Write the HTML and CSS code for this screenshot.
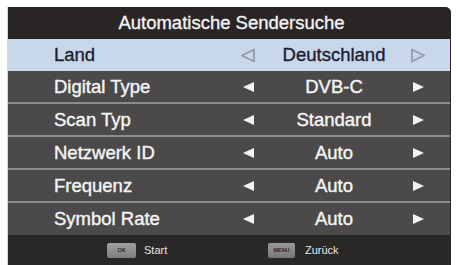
FILE: index.html
```html
<!DOCTYPE html>
<html lang="de">
<head>
<meta charset="utf-8">
<title>Automatische Sendersuche</title>
<link rel="stylesheet" href="styles.css">
</head>
<body>
<div class="panel">
  <div class="title">Automatische Sendersuche</div>
  <div class="row selected">
    <span class="label">Land</span>
    <span class="arrow"><svg width="16" height="15" viewBox="0 0 16 15"><polygon points="14,1.5 14,13.5 2,7.5" fill="none" stroke="#939cab" stroke-width="1.8" stroke-linejoin="round"/></svg></span>
    <span class="value">Deutschland</span>
    <span class="arrow"><svg width="16" height="15" viewBox="0 0 16 15"><polygon points="2,1.5 2,13.5 14,7.5" fill="none" stroke="#939cab" stroke-width="1.8" stroke-linejoin="round"/></svg></span>
  </div>
  <div class="row">
    <span class="label">Digital Type</span>
    <span class="arrow"><svg width="11" height="10" viewBox="0 0 11 10"><polygon points="11,0 11,10 0,5" class="tri"/></svg></span>
    <span class="value">DVB-C</span>
    <span class="arrow"><svg width="11" height="10" viewBox="0 0 11 10"><polygon points="0,0 0,10 11,5" class="tri"/></svg></span>
  </div>
  <div class="row">
    <span class="label">Scan Typ</span>
    <span class="arrow"><svg width="11" height="10" viewBox="0 0 11 10"><polygon points="11,0 11,10 0,5" class="tri"/></svg></span>
    <span class="value">Standard</span>
    <span class="arrow"><svg width="11" height="10" viewBox="0 0 11 10"><polygon points="0,0 0,10 11,5" class="tri"/></svg></span>
  </div>
  <div class="row">
    <span class="label">Netzwerk ID</span>
    <span class="arrow"><svg width="11" height="10" viewBox="0 0 11 10"><polygon points="11,0 11,10 0,5" class="tri"/></svg></span>
    <span class="value">Auto</span>
    <span class="arrow"><svg width="11" height="10" viewBox="0 0 11 10"><polygon points="0,0 0,10 11,5" class="tri"/></svg></span>
  </div>
  <div class="row">
    <span class="label">Frequenz</span>
    <span class="arrow"><svg width="11" height="10" viewBox="0 0 11 10"><polygon points="11,0 11,10 0,5" class="tri"/></svg></span>
    <span class="value">Auto</span>
    <span class="arrow"><svg width="11" height="10" viewBox="0 0 11 10"><polygon points="0,0 0,10 11,5" class="tri"/></svg></span>
  </div>
  <div class="row last">
    <span class="label">Symbol Rate</span>
    <span class="arrow"><svg width="11" height="10" viewBox="0 0 11 10"><polygon points="11,0 11,10 0,5" class="tri"/></svg></span>
    <span class="value">Auto</span>
    <span class="arrow"><svg width="11" height="10" viewBox="0 0 11 10"><polygon points="0,0 0,10 11,5" class="tri"/></svg></span>
  </div>
  <div class="footer">
    <div class="hint first"><span class="key">OK</span><span class="hint-text">Start</span></div>
    <div class="hint"><span class="key menu">MENU</span><span class="hint-text">Zurück</span></div>
  </div>
</div>
</body>
</html>
```

FILE: styles.css
```css
html, body {
  margin: 0;
  padding: 0;
  background: #ffffff;
}

body {
  font-family: "Liberation Sans", Arial, sans-serif;
  width: 457px;
  height: 265px;
  overflow: hidden;
}

.panel {
  margin: 7px 6px 0 7px;
  background: #2c2828;
  border-top-right-radius: 6px;
  border-left: 1px solid #d6d6d6;
  overflow: hidden;
}

.title {
  height: 32px;
  line-height: 32px;
  text-align: center;
  color: #f2f2f2;
  font-size: 18.5px;
  -webkit-text-stroke: 0.35px #f2f2f2;
  background: #2a2525;
  padding-left: 4px;
}

.row {
  display: grid;
  grid-template-columns: 225px 30px 142px 26px 1fr;
  align-items: center;
  height: 31px;
  background: #4b4949;
  color: #f4f4f4;
  font-size: 18.5px;
  -webkit-text-stroke: 0.4px #f4f4f4;
  border-bottom: 2px solid #8d8d8d;
  margin-right: 1px;
}

.row.selected {
  height: 32px;
  background: #c9d7ea;
  color: #1c2131;
  -webkit-text-stroke: 0.35px #1c2131;
  border-bottom: none;
}

.row.last {
  height: 32px;
  border-bottom: none;
}

.label {
  padding-left: 46px;
  white-space: nowrap;
}

.arrow {
  display: flex;
  justify-content: center;
  align-items: center;
}

.arrow svg {
  display: block;
}

.tri {
  fill: #f2f2f2;
}

.value {
  text-align: center;
  white-space: nowrap;
}

.footer {
  display: flex;
  align-items: center;
  height: 30px;
  background: #2a2727;
  padding-left: 99px;
}

.hint {
  display: flex;
  align-items: center;
  gap: 8px;
}

.hint.first {
  width: 161px;
}

.key {
  display: inline-flex;
  justify-content: center;
  align-items: center;
  width: 29px;
  height: 15px;
  border-radius: 2px;
  background: linear-gradient(#a0a0a0, #7e7e7e);
  color: #2a2a2a;
  font-size: 5.5px;
  font-weight: bold;
}

.key.menu {
  width: 27px;
  background: linear-gradient(#9a9a9a, #777777);
  margin-right: 2px;
}

.hint-text {
  color: #e6e6e6;
  font-size: 11px;
}
```
